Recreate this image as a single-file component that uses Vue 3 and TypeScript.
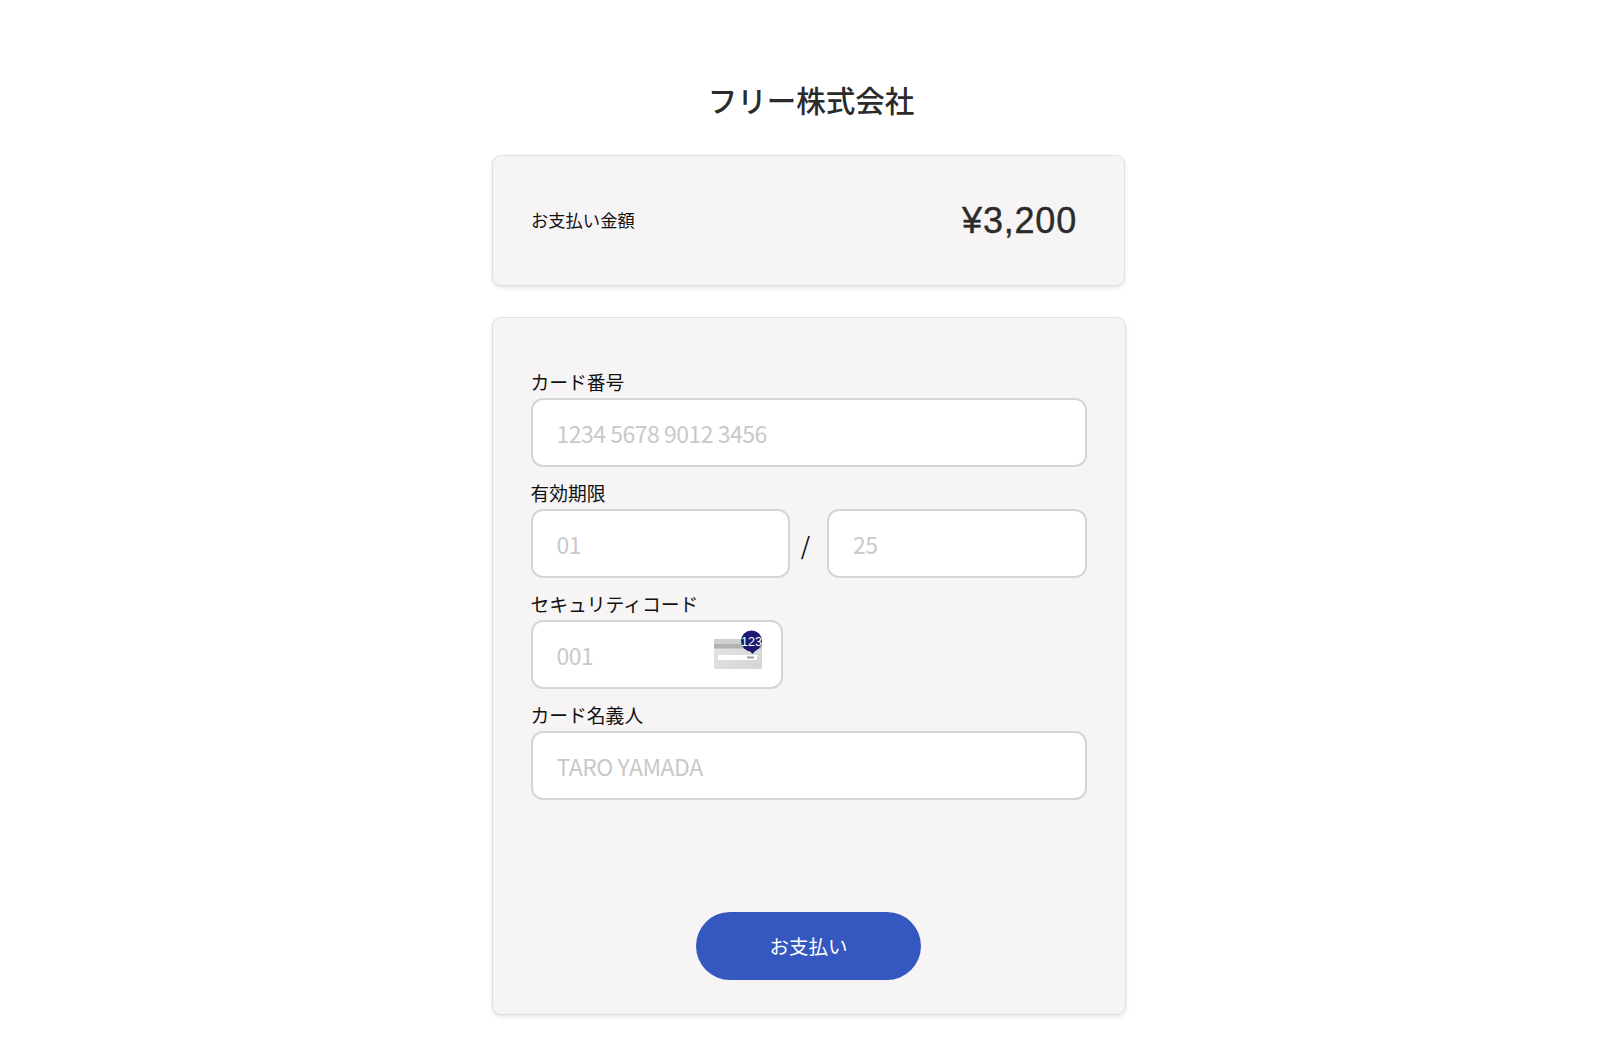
<template>
  <main class="page">
    <h1 class="shop">フリー株式会社</h1>

    <section class="card amount">
      <span class="amount-label">お支払い金額</span>
      <span class="amount-value">¥3,200</span>
    </section>

    <form class="card form" @submit.prevent>
      <div class="field">
        <label for="number">カード番号</label>
        <input id="number" type="text" placeholder="1234 5678 9012 3456" />
      </div>

      <div class="field">
        <label for="month">有効期限</label>
        <div class="expiry">
          <input id="month" type="text" placeholder="01" />
          <span class="slash">/</span>
          <input id="year" type="text" placeholder="25" />
        </div>
      </div>

      <div class="field">
        <label for="cvc">セキュリティコード</label>
        <div class="cvc">
          <input id="cvc" type="text" placeholder="001" />
          <svg class="cvc-icon" width="50" height="42" viewBox="0 0 50 42">
            <defs>
              <linearGradient id="cardBody" x1="0" y1="0" x2="1" y2="1">
                <stop offset="0" stop-color="#e6e6e6" />
                <stop offset="1" stop-color="#d4d4d4" />
              </linearGradient>
            </defs>
            <rect x="1" y="9" width="48" height="30" rx="1.5" fill="url(#cardBody)" />
            <rect x="1" y="9" width="48" height="5" fill="#cfcfcf" />
            <rect x="1" y="14" width="48" height="4.5" fill="#b2b2b2" />
            <rect x="5" y="25" width="39" height="5" fill="#fff" />
            <rect x="34" y="26.5" width="7" height="2" fill="#a0a0a0" />
            <path d="M36 20 L39.5 24 L43 20 Z" fill="#1a1a6e" />
            <circle cx="38.5" cy="11" r="10.5" fill="#1a1a6e" />
            <text x="38.5" y="15.5" text-anchor="middle" class="cvc-text">123</text>
          </svg>
        </div>
      </div>

      <div class="field">
        <label for="name">カード名義人</label>
        <input id="name" type="text" placeholder="TARO YAMADA" />
      </div>

      <button class="pay" type="submit">お支払い</button>
    </form>
  </main>
</template>

<script setup lang="ts">
</script>

<style>
body {
  background: #fff;
}
</style>

<style scoped>
.page {
  width: 634px;
  height: 1050px;
  margin-left: 492px;
  padding-top: 78px;
  box-sizing: border-box;
  font-family: "Noto Sans CJK JP", "Noto Sans", sans-serif;
  color: #1f1f1f;
}

.shop {
  margin: 0 0 34px;
  padding-left: 4px;
  font-size: 29.5px;
  line-height: 43px;
  font-weight: 500;
  text-align: center;
  color: #2b2b2b;
}

.card {
  box-sizing: border-box;
  background: #f6f4f5;
  border: 1px solid #e2e0e2;
  border-radius: 9px;
  box-shadow: 0 2px 4px rgba(0, 0, 0, 0.1);
}

.amount {
  width: 633px;
  height: 131px;
  display: flex;
  align-items: center;
  justify-content: space-between;
  padding: 0 47px 0 38px;
}

.amount-label {
  padding-bottom: 3px;
  font-size: 17.3px;
  color: #111;
}

.amount-value {
  padding-top: 1px;
  font-family: "Liberation Sans", sans-serif;
  font-size: 36px;
  letter-spacing: 0.8px;
  color: #2b2b2b;
  -webkit-text-stroke: 0.4px #2b2b2b;
}

.form {
  margin-top: 31px;
  height: 698px;
  padding: 50px 38.5px 0 37.5px;
  display: flex;
  flex-direction: column;
}

.field {
  display: flex;
  flex-direction: column;
}

.field label {
  height: 30px;
  font-size: 18.8px;
  line-height: 28px;
  color: #111;
}

.field + .field {
  margin-top: 12px;
}

input {
  box-sizing: border-box;
  width: 100%;
  height: 69px;
  padding: 0 24px;
  background: #fff;
  border: 2px solid #d6d4d5;
  border-radius: 12px;
  outline: none;
  font-family: inherit;
  font-size: 23px;
  letter-spacing: -0.5px;
  color: #222;
}

input::placeholder {
  color: #c9c9c9;
  opacity: 1;
}

.expiry {
  display: flex;
  align-items: center;
  gap: 8px;
}

.expiry input {
  flex: 1;
  min-width: 0;
}

.slash {
  width: 21px;
  padding: 2px 6px 0 0;
  box-sizing: border-box;
  text-align: center;
  font-size: 24px;
  color: #111;
}

.cvc {
  position: relative;
  width: 252px;
}

.cvc-icon {
  position: absolute;
  right: 20px;
  top: 10px;
}

.cvc-text {
  font-family: "Liberation Sans", sans-serif;
  font-size: 12.5px;
  fill: #fff;
}

.pay {
  align-self: center;
  width: 225px;
  height: 68px;
  margin-top: 112px;
  padding-bottom: 2px;
  border: none;
  border-radius: 34px;
  background: #3558c0;
  color: #fff;
  font-family: inherit;
  font-size: 19.5px;
  font-weight: 400;
  cursor: pointer;
}
</style>
